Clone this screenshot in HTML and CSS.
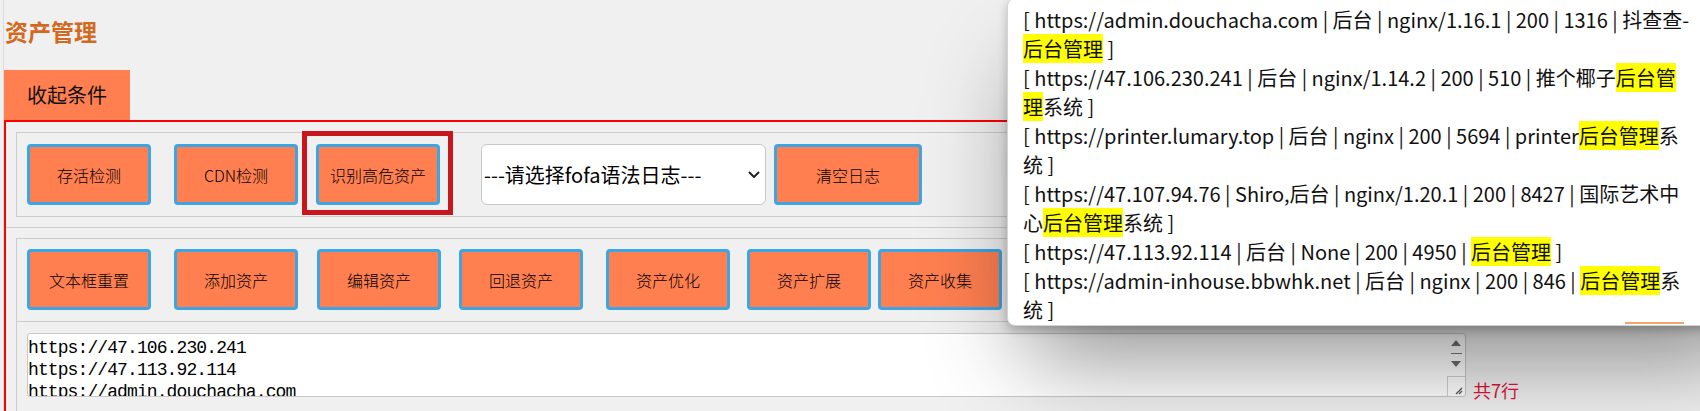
FILE: index.html
```html
<!DOCTYPE html>
<html lang="zh-CN">
<head>
<meta charset="utf-8">
<title>资产管理</title>
<link rel="stylesheet" href="styles.css">
</head>
<body>
<div class="page">
  <h2 class="title">资产管理</h2>
  <div class="tab">收起条件</div>
  <div class="panel">
    <div class="section section-top">
      <div class="box">
        <div class="row">
          <button class="btn">存活检测</button>
          <button class="btn g23">CDN检测</button>
          <span class="hl-wrap g18"><button class="btn">识别高危资产</button><span class="annot"></span></span>
          <div class="select-wrap g41">
            <select class="select"><option>---请选择fofa语法日志---</option></select>
            <svg class="chev" width="12" height="7" viewBox="0 0 12 7"><polyline points="1,1 6,6 11,1" fill="none" stroke="#222" stroke-width="2"/></svg>
          </div>
          <button class="btn wide g8">清空日志</button>
        </div>
      </div>
    </div>
    <div class="section">
      <div class="box">
        <div class="row row-line">
          <button class="btn">文本框重置</button>
          <button class="btn g23">添加资产</button>
          <button class="btn g19">编辑资产</button>
          <button class="btn g18">回退资产</button>
          <button class="btn g23">资产优化</button>
          <button class="btn g17">资产扩展</button>
          <button class="btn g7">资产收集</button>
        </div>
        <div class="editor-row">
          <div class="editor">
            <textarea class="ta" spellcheck="false">https://47.106.230.241
https://47.113.92.114
https://admin.douchacha.com
https://printer.lumary.top
https://47.107.94.76
https://admin-inhouse.bbwhk.net
https://47.98.61.203</textarea>
            <div class="sbar">
              <svg class="arrow-up" width="10" height="6" viewBox="0 0 10 6"><polygon points="0,6 5,0 10,6" fill="#6e6e6e"/></svg>
              <span class="thumb"></span>
              <svg class="arrow-down" width="10" height="6" viewBox="0 0 10 6"><polygon points="0,0 10,0 5,6" fill="#6e6e6e"/></svg>
              <span class="grip"><svg width="9" height="9" viewBox="0 0 9 9"><line x1="8" y1="2" x2="2" y2="8" stroke="#555" stroke-width="1.2"/><line x1="8" y1="5" x2="5" y2="8" stroke="#555" stroke-width="1.2"/></svg></span>
            </div>
          </div>
          <span class="count">共7行</span>
        </div>
      </div>
    </div>
  </div>
</div>
<div class="popup">
  <p class="entry">[ https://admin.douchacha.com | 后台 | nginx/1.16.1 | 200 | 1316 | 抖查查-<br><mark>后台管理</mark> ]</p>
  <p class="entry">[ https://47.106.230.241 | 后台 | nginx/1.14.2 | 200 | 510 | 推个椰子<mark>后台管</mark><br><mark>理</mark>系统 ]</p>
  <p class="entry">[ https://printer.lumary.top | 后台 | nginx | 200 | 5694 | printer<mark>后台管理</mark>系<br>统 ]</p>
  <p class="entry">[ https://47.107.94.76 | Shiro,后台 | nginx/1.20.1 | 200 | 8427 | 国际艺术中<br>心<mark>后台管理</mark>系统 ]</p>
  <p class="entry">[ https://47.113.92.114 | 后台 | None | 200 | 4950 | <mark>后台管理</mark> ]</p>
  <p class="entry">[ https://admin-inhouse.bbwhk.net | 后台 | nginx | 200 | 846 | <mark>后台管理</mark>系<br>统 ]</p>
  <span class="peek"></span>
</div>
</body>
</html>
```

FILE: styles.css
```css
html, body {
  margin: 0;
  padding: 0;
  overflow: hidden;
}

body {
  width: 1700px;
  height: 411px;
  position: relative;
  background: #f0f0f0;
  color: #000;
  font-family: "Noto Sans", "Noto Sans CJK SC", sans-serif;
}

.page {
  margin-left: 3px;
  border-left: 1px solid #dcdcdc;
  width: 1800px;
  min-height: 411px;
}

.title {
  margin: 0;
  padding: 16px 0 0 1px;
  font-family: "Noto Sans CJK SC", sans-serif;
  font-size: 23px;
  line-height: 30px;
  font-weight: 700;
  color: #d2691e;
}

.tab {
  width: max-content;
  margin-top: 24px;
  height: 50px;
  line-height: 50px;
  padding: 0 23px;
  background: #ff7f50;
  font-family: "Noto Sans CJK SC", sans-serif;
  font-size: 20px;
  color: #111;
}

.panel {
  border: 2px solid #ff0000;
  width: 1760px;
}

.section {
  padding: 10px;
}

.section-top {
  border-bottom: 1px solid #cccccc;
}

.box {
  border: 1px solid #cccccc;
}

.row {
  display: flex;
  align-items: center;
  padding: 11px 10px;
}

.row-line {
  padding: 10px 10px 11px;
  border-bottom: 1px solid #cccccc;
}

.btn {
  box-sizing: border-box;
  width: 124px;
  height: 61px;
  margin: 0;
  padding: 0;
  background: #ff7f50;
  border: 3px solid #3aa6e6;
  border-radius: 4px;
  font-family: "Noto Sans CJK SC", sans-serif;
  font-size: 16px;
  font-weight: 300;
  color: #000;
  flex: none;
}

.btn.wide {
  width: 148px;
}

.g7 { margin-left: 7px; }
.g8 { margin-left: 8px; }
.g17 { margin-left: 17px; }
.g18 { margin-left: 18px; }
.g19 { margin-left: 19px; }
.g23 { margin-left: 23px; }
.g41 { margin-left: 41px; }

.hl-wrap {
  position: relative;
  display: flex;
  flex: none;
}

.annot {
  position: absolute;
  top: -13px;
  left: -14px;
  right: -13px;
  bottom: -10px;
  border: 5px solid #c8161d;
  pointer-events: none;
}

.select-wrap {
  box-sizing: border-box;
  width: 285px;
  height: 61px;
  display: flex;
  align-items: center;
  background: #fff;
  border: 1px solid #c8c8c8;
  border-radius: 6px;
  flex: none;
}

.select {
  flex: 1;
  min-width: 0;
  -webkit-appearance: none;
  appearance: none;
  border: none;
  background: transparent;
  padding: 0 0 0 2px;
  font-family: "Noto Sans CJK SC", sans-serif;
  font-size: 20px;
  color: #000;
  outline: none;
}

.chev {
  margin: 0 5px 0 4px;
  flex: none;
}

.editor-row {
  display: flex;
  align-items: flex-end;
  padding: 11px 10px 14px;
}

.editor {
  box-sizing: border-box;
  width: 1439px;
  height: 64px;
  display: flex;
  background: #fff;
  border: 1px solid #c8c8c8;
  border-radius: 3px;
}

.ta {
  flex: 1;
  border: none;
  outline: none;
  resize: none;
  overflow: hidden;
  margin: 0;
  padding: 3px 0 0 0;
  background: transparent;
  font-family: "Liberation Mono", monospace;
  font-size: 18px;
  letter-spacing: -0.9px;
  line-height: 22px;
  color: #000;
}

.sbar {
  width: 18px;
  display: flex;
  flex-direction: column;
  align-items: center;
}

.arrow-up {
  margin-top: 6px;
}

.thumb {
  width: 11px;
  height: 1px;
  margin-top: 7px;
  background: #777;
}

.arrow-down {
  margin-top: 7px;
}

.grip {
  margin-top: auto;
  box-sizing: border-box;
  width: 18px;
  height: 20px;
  border-top: 1px solid #cfcfcf;
  border-left: 1px solid #cfcfcf;
  display: flex;
  align-items: flex-end;
  justify-content: flex-end;
  padding: 0 2px 1px 0;
}

.count {
  margin-left: 7px;
  margin-bottom: -3px;
  font-family: "Noto Sans CJK SC", sans-serif;
  font-size: 18px;
  line-height: 20px;
  color: #dc143c;
}

.popup {
  position: absolute;
  top: -2px;
  left: 1007px;
  width: 760px;
  height: 328px;
  box-sizing: border-box;
  padding: 6px 0 0 15px;
  background: #fff;
  border: 1px solid #d4d4d4;
  border-radius: 8px;
  box-shadow: 0 4px 10px rgba(0, 0, 0, 0.22), 0 50px 90px -20px rgba(0, 0, 0, 0.45);
  font-family: "Noto Sans CJK SC", sans-serif;
  font-size: 20px;
  line-height: 29px;
  color: #111;
  overflow: hidden;
}

.entry {
  margin: 0;
  white-space: nowrap;
}

.entry mark {
  background: #ffff00;
  color: #111;
}

.peek {
  position: absolute;
  left: 617px;
  bottom: 1px;
  width: 59px;
  height: 2px;
  background: #f2a672;
}
```
